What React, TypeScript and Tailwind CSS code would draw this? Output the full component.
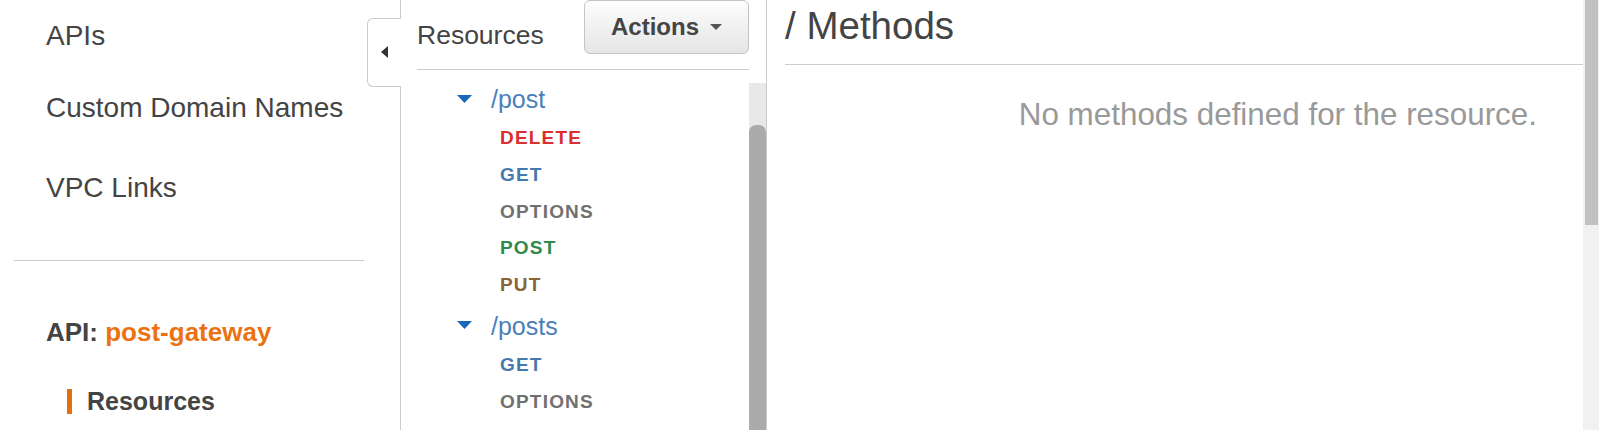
import React from "react";

const font = { fontFamily: '"Liberation Sans", Arial, sans-serif' };

type M = { name: string; cls: string };

const postMethods: M[] = [
  { name: "DELETE", cls: "text-[#d9302f]" },
  { name: "GET", cls: "text-[#4479b0]" },
  { name: "OPTIONS", cls: "text-[#707070]" },
  { name: "POST", cls: "text-[#2f8a4c]" },
  { name: "PUT", cls: "text-[#8c6239]" },
];

const postsMethods: M[] = [
  { name: "GET", cls: "text-[#4479b0]" },
  { name: "OPTIONS", cls: "text-[#707070]" },
];

function Caret() {
  return (
    <svg width="15" height="8" viewBox="0 0 15 8" className="shrink-0">
      <polygon points="0,0 15,0 7.5,8" fill="#1a66b8" />
    </svg>
  );
}

function ResourceRow({ path }: { path: string }) {
  return (
    <div className="flex h-[43px] items-center pl-[40px]">
      <Caret />
      <span className="ml-[19px] mt-[2px] text-[25px] leading-[43px] text-[#4a7fba]">{path}</span>
    </div>
  );
}

function MethodRow({ m }: { m: M }) {
  return (
    <div className={`pl-[83px] text-[19px] font-bold leading-[36.75px] tracking-[1.2px] ${m.cls}`}>
      {m.name}
    </div>
  );
}

export default function App() {
  return (
    <div className="flex h-[430px] w-[1599px] overflow-hidden bg-white text-[#444]" style={font}>
      {/* Left sidebar */}
      <div className="flex w-[400px] shrink-0 flex-col">
        <div className="ml-[46px] mt-[20px] text-[28px] leading-[32px]">APIs</div>
        <div className="ml-[46px] mt-[40px] text-[28px] leading-[32px]">Custom Domain Names</div>
        <div className="ml-[46px] mt-[48px] text-[28px] leading-[32px]">VPC Links</div>
        <div className="ml-[14px] mt-[56px] h-px w-[350px] bg-[#cccccc]" />
        <div className="ml-[46px] mt-[56px] text-[26px] font-bold leading-[30px]">
          API: <span className="text-[#ec7211]">post-gateway</span>
        </div>
        <div className="ml-[67px] mt-[42px] border-l-[5px] border-[#e07010] pl-[15px] text-[25px] font-bold leading-[25px]">
          Resources
        </div>
      </div>

      {/* Middle resources panel */}
      <div className="relative flex w-[367px] shrink-0 border-x border-[#cccccc]">
        <div className="absolute left-[-34px] top-[18px] h-[69px] w-[34px] rounded-l-[6px] border-y border-l border-[#cccccc] bg-white">
          <svg width="7" height="12" viewBox="0 0 7 12" className="absolute left-[13px] top-[27px]">
            <polygon points="7,0 7,12 0,6" fill="#333" />
          </svg>
        </div>
        <div className="flex w-[348px] flex-col pl-[16px]">
          <div className="flex h-[70px] items-start justify-between border-b border-[#cccccc]">
            <div className="mt-[20px] text-[26.5px] leading-[30px]">Resources</div>
            <button className="flex h-[54px] w-[165px] items-center justify-center gap-[11px] rounded-[6px] border border-[#c4c4c4] bg-gradient-to-b from-[#fdfdfd] to-[#e5e5e5] text-[24px] font-bold text-[#444]">
              <span>Actions</span>
              <svg width="12" height="6" viewBox="0 0 12 6">
                <polygon points="0,0 12,0 6,6" fill="#555" />
              </svg>
            </button>
          </div>
          <div className="mt-[7px] flex flex-col">
            <ResourceRow path="/post" />
            {postMethods.map((m) => (
              <MethodRow key={"a" + m.name} m={m} />
            ))}
            <ResourceRow path="/posts" />
            {postsMethods.map((m) => (
              <MethodRow key={"b" + m.name} m={m} />
            ))}
          </div>
        </div>
        <div className="flex w-[17px] flex-col">
          <div className="h-[83px] bg-white" />
          <div className="flex flex-1 flex-col bg-[#e8e8e8]">
            <div className="h-[42px]" />
            <div className="flex-1 rounded-t-[7px] bg-[#ababab]" />
          </div>
        </div>
      </div>

      {/* Right methods panel */}
      <div className="flex flex-1 flex-col">
        <div className="ml-[18px] h-[65px] border-b border-[#cccccc]">
          <div className="mt-[4px] text-[38.5px] leading-[44px] text-[#444]">/ Methods</div>
        </div>
        <div className="mt-[32px] flex justify-end pr-[46px] text-[31.4px] leading-[36px] text-[#999999]">
          No methods defined for the resource.
        </div>
      </div>

      {/* Right scrollbar */}
      <div className="flex w-[16px] shrink-0 flex-col bg-[#f1f1f1] pl-[2px] pr-[1px]">
        <div className="h-[225px] bg-[#c1c1c1]" />
      </div>
    </div>
  );
}
